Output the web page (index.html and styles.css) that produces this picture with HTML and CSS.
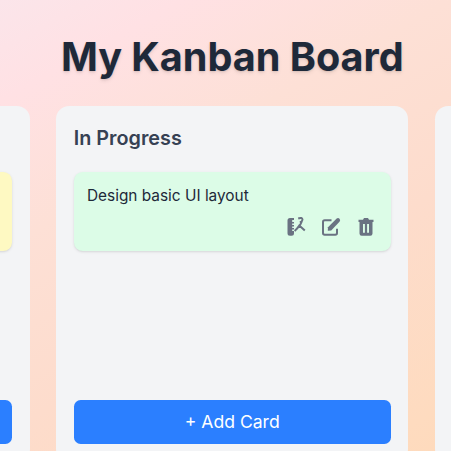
FILE: index.html
```html
<!DOCTYPE html>
<html lang="en">
<head>
<meta charset="utf-8">
<title>My Kanban Board</title>
<link rel="stylesheet" href="styles.css">
</head>
<body>
<main class="page">
  <h1 class="title">My Kanban Board</h1>
  <div class="board">
    <section class="column">
      <div class="cards"><article class="card card-yellow"></article></div>
      <div class="add"></div>
    </section>
    <section class="column">
      <h2 class="heading">In Progress</h2>
      <div class="cards">
        <article class="card card-green">
          <p class="text">Design basic UI layout</p>
          <div class="actions">
            <svg class="icon" viewBox="0 0 20 20" fill="none" stroke="currentColor" stroke-width="2">
              <path d="M1.5 3.5Q1.5 1 4 1H8V3H6.2V5H8V6.4H6.2V8H8V9.4H6.2V11H8V12.4H6.2V14H8V16.2Q8 18.7 5.5 18.7H4Q1.5 18.7 1.5 16.2Z" fill="currentColor" stroke="none"/>
              <path d="M12.2 1.5Q16.4 0 16.5 2.8Q16.4 4.5 13.8 5.4M15.8 4.4L13.5 9.3M8.6 14Q11 12 13.3 8.6L18.8 13.6"/>
            </svg>
            <svg class="icon" viewBox="0 0 20 20" fill="none" stroke="currentColor" stroke-width="2">
              <path d="M10.5 3.2H3.7Q2 3.2 2 5V16Q2 17.8 3.7 17.8H14.3Q16 17.8 16 16V11.8"/>
              <path d="M6.8 13.8L7 10.3L15.4 1.8Q17 .4 18.5 1.7Q19.8 3.2 18.5 4.8L10.2 13.4Z" fill="currentColor" stroke="none"/>
            </svg>
            <svg class="icon" viewBox="0 0 20 20" fill="currentColor">
              <path fill-rule="evenodd" d="M7 2.7L8 1H12L13 2.7H17.5V5H16.5V16.5Q16.5 18.7 14.3 18.7H5.7Q3.5 18.7 3.5 16.5V5H2.5V2.7ZM7 7V15.8H8.9V7ZM11.1 7V15.8H13V7Z"/>
            </svg>
          </div>
        </article>
      </div>
      <button class="add">+ Add Card</button>
    </section>
    <section class="column"></section>
  </div>
</main>
</body>
</html>
```
FILE: styles.css
```css
* { box-sizing: border-box; margin: 0; padding: 0; }
body {
  font-family: Inter, sans-serif;
  overflow: hidden;
}
.page {
  height: 451px;
  overflow: hidden;
  padding-top: 35.2px;
  background: linear-gradient(151deg, #fbe5ea 0, #ffe1e4 88px, #fde0d6 219px, #fddccc 380px, #fedbbf 571px, #fedabc 613px);
}
.title {
  width: 464.6px;
  font-size: 39.6px;
  line-height: 44px;
  font-weight: 700;
  text-align: center;
  color: #1e2939;
  text-shadow: 0 1px 2px rgb(0 0 0 / 10%), 0 2px 4px rgb(0 0 0 / 8%);
}
.board {
  display: flex;
  gap: 26.4px;
  width: 1108.8px;
  margin: 26.8px 0 0 -322.2px;
}
.column {
  display: flex;
  flex-direction: column;
  width: 352px;
  height: 355.6px;
  padding: 17.6px;
  border-radius: 13.2px;
  background: #f3f4f6;
}
.heading {
  height: 48.2px;
  font-size: 19.8px;
  line-height: 28.6px;
  font-weight: 600;
  color: #364153;
}
.cards { flex: 1; }
.column:first-child .cards { padding-top: 48.2px; }
.card {
  height: 79px;
  padding: 13.2px;
  border-radius: 8.8px;
  box-shadow: 0 1px 3px rgb(0 0 0 / 10%), 0 1px 2px -1px rgb(0 0 0 / 10%);
}
.card-yellow { background: #fef9c2; }
.card-green { background: #dcfce7; }
.text {
  font-size: 15.4px;
  line-height: 22px;
  color: #1e2939;
}
.actions {
  display: flex;
  justify-content: flex-end;
  gap: 15.2px;
  padding: 10px 1.3px 0 0;
}
.icon {
  display: block;
  width: 20px;
  height: 20px;
  color: #6a7282;
}
.add {
  flex: none;
  height: 44px;
  border: 0;
  border-radius: 6.6px;
  background: #2b7fff;
  color: #fff;
  font: 400 17.6px/44px Inter, sans-serif;
  text-align: center;
}
```
